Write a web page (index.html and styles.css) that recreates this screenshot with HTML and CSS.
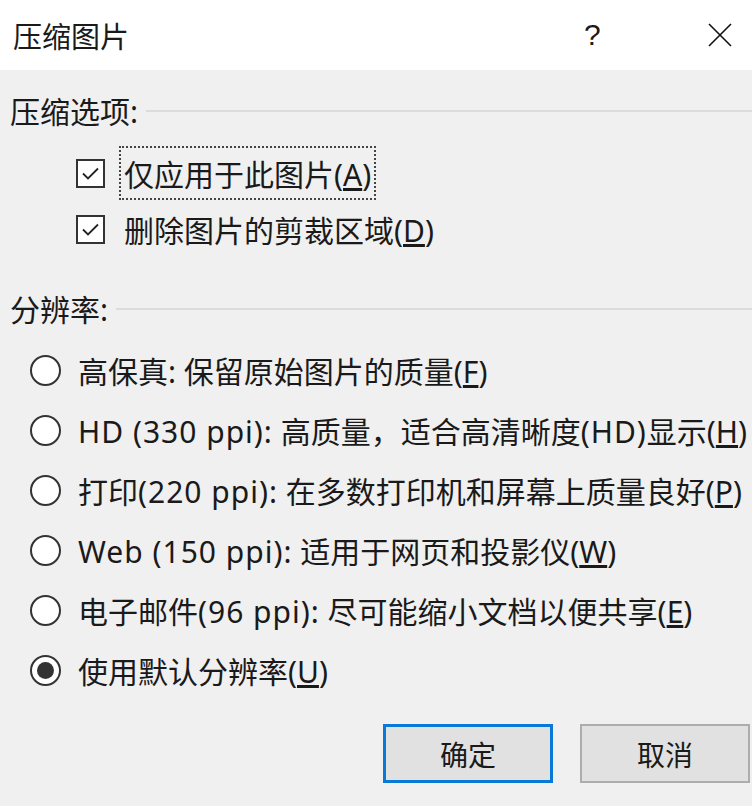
FILE: index.html
```html
<!DOCTYPE html>
<html>
	<head>
		<title>压缩图片</title>
		<link rel="stylesheet" href="styles.css">
	</head>
	<body>
	<div class="dialog">
		<div class="titlebar">
			<span class="title">压缩图片</span>
			<span class="help">?</span>
			<span class="close">
				<svg width="24" height="24" viewBox="0 0 24 24"><path d="M1 1 L23 23 M23 1 L1 23" stroke="#111" stroke-width="1.6" fill="none"/></svg>
			</span>
		</div>
		<div class="content">
			<div class="group-head"><span>压缩选项:</span><div class="rule"></div></div>
			<div class="checks">
				<div class="check-row">
					<span class="box"><svg width="25" height="25" viewBox="0 0 25 25"><path d="M5 12.5 L10 17.5 L20 7.5" stroke="#222" stroke-width="1.8" fill="none"/></svg></span>
					<span class="label focused">仅应用于此图片(<u>A</u>)</span>
				</div>
				<div class="check-row">
					<span class="box"><svg width="25" height="25" viewBox="0 0 25 25"><path d="M5 12.5 L10 17.5 L20 7.5" stroke="#222" stroke-width="1.8" fill="none"/></svg></span>
					<span class="label">删除图片的剪裁区域(<u>D</u>)</span>
				</div>
			</div>
			<div class="group-head second"><span>分辨率:</span><div class="rule"></div></div>
			<div class="radios">
				<div class="radio-row"><span class="radio"></span><span>高保真: 保留原始图片的质量(<u>F</u>)</span></div>
				<div class="radio-row"><span class="radio"></span><span><span class="latin">HD (330 ppi):</span> 高质量，适合高清晰度<span class="latin">(HD)</span>显示(<u>H</u>)</span></div>
				<div class="radio-row"><span class="radio"></span><span>打印<span class="latin">(220 ppi):</span> 在多数打印机和屏幕上质量良好(<u>P</u>)</span></div>
				<div class="radio-row"><span class="radio"></span><span><span class="latin">Web (150 ppi):</span> 适用于网页和投影仪(<u>W</u>)</span></div>
				<div class="radio-row"><span class="radio"></span><span>电子邮件<span class="latin">(96 ppi):</span> 尽可能缩小文档以便共享(<u>E</u>)</span></div>
				<div class="radio-row"><span class="radio checked"></span><span>使用默认分辨率(<u>U</u>)</span></div>
			</div>
			<div class="buttons">
				<button class="btn default">确定</button>
				<button class="btn">取消</button>
			</div>
		</div>
	</div>
	</body>
</html>
```

FILE: styles.css
```css
body {
	margin: 0;
	background-color: #f0f0f0;
	font-family: "Noto Sans", "Noto Sans CJK SC", sans-serif;
	font-size: 30px;
	color: #1a1a1a;
}
.dialog {
	width: 752px;
	height: 806px;
	overflow: hidden;
}
.titlebar {
	height: 70px;
	background-color: #fff;
	display: flex;
	align-items: center;
	padding-left: 13px;
}
.title {
	flex: 1;
	font-size: 29px;
}
.help {
	width: 116px;
	font-family: "Liberation Sans", sans-serif;
	font-size: 30px;
	font-weight: 300;
	margin-right: 8px;
}
.close {
	width: 44px;
	display: flex;
}
.content {
	padding-left: 10px;
}
.group-head {
	height: 40px;
	margin-top: 20px;
	display: flex;
	align-items: center;
}
.group-head.second {
	margin-top: 31px;
}
.rule {
	flex: 1;
	height: 2px;
	background-color: #dcdcdc;
	margin-left: 8px;
	margin-top: 2px;
}
.checks {
	margin-top: 15px;
	padding-left: 66px;
}
.check-row {
	height: 56px;
	display: flex;
	align-items: center;
}
.box {
	flex: none;
	width: 29px;
	height: 29px;
	box-sizing: border-box;
	border: 2px solid #333;
	background-color: #fff;
	display: flex;
	margin-right: 14px;
}
.label {
	padding: 3px 3px;
	border: 2px solid transparent;
}
.label.focused {
	border: 2px dotted #444;
}
.radios {
	margin-top: 12px;
	padding-left: 20px;
}
.radio-row {
	height: 60px;
	display: flex;
	align-items: center;
}
.latin {
	letter-spacing: 1px;
}
.radio {
	flex: none;
	width: 31px;
	height: 31px;
	box-sizing: border-box;
	border: 2px solid #333;
	border-radius: 50%;
	background-color: #fff;
	margin-right: 17px;
	display: flex;
	align-items: center;
	justify-content: center;
}
.radio.checked::after {
	content: "";
	width: 17px;
	height: 17px;
	border-radius: 50%;
	background-color: #333;
}
.buttons {
	margin-top: 24px;
	display: flex;
	justify-content: flex-end;
	gap: 27px;
	padding-right: 2px;
}
.btn {
	width: 170px;
	height: 59px;
	font-family: "Noto Sans CJK SC", sans-serif;
	font-size: 28px;
	color: #1a1a1a;
	background-color: #e1e1e1;
	border: 2px solid #adadad;
}
.btn.default {
	border: 3px solid #0a78d7;
}
```
